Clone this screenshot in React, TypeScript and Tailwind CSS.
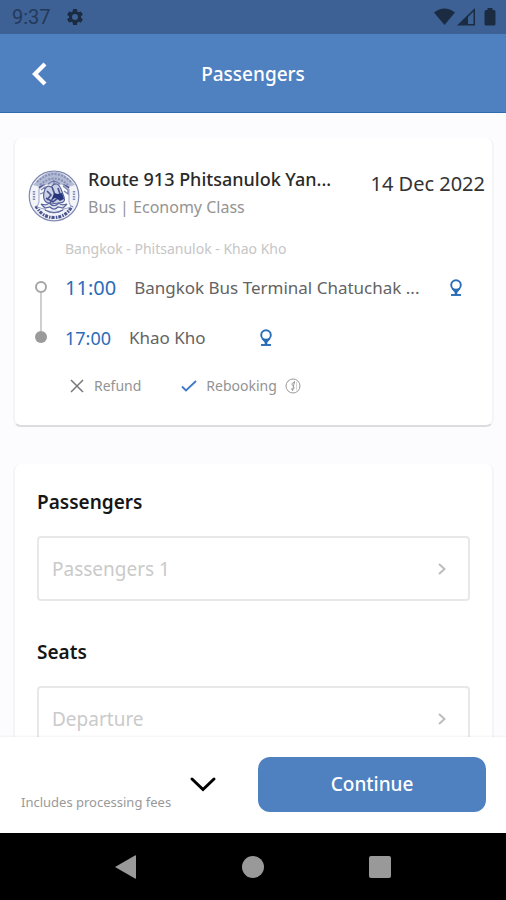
import type { ReactNode } from "react";

function StatusBar() {
  return (
    <div className="flex h-[34px] shrink-0 items-center justify-between bg-[#3d6194] pl-3 pr-[10px] text-[#1b2c42]">
      <div className="flex items-center gap-[14px]">
        <span className="font-['Roboto',sans-serif] text-[20px] leading-6 text-[#24395a]">9:37</span>
        <svg className="h-5 w-5" viewBox="0 0 24 24" fill="currentColor">
          <path d="M19.14 12.94c.04-.3.06-.61.06-.94 0-.32-.02-.64-.07-.94l2.03-1.58a.49.49 0 0 0 .12-.61l-1.92-3.32a.49.49 0 0 0-.59-.22l-2.39.96c-.5-.38-1.03-.7-1.62-.94l-.36-2.54a.48.48 0 0 0-.48-.41h-3.84a.47.47 0 0 0-.47.41l-.36 2.54c-.59.24-1.13.57-1.62.94l-2.39-.96a.48.48 0 0 0-.59.22L2.74 8.87c-.12.21-.08.47.12.61l2.03 1.58c-.05.3-.09.63-.09.94s.02.64.07.94l-2.03 1.58a.49.49 0 0 0-.12.61l1.92 3.32c.12.22.37.29.59.22l2.39-.96c.5.38 1.03.7 1.62.94l.36 2.54c.05.24.24.41.48.41h3.84c.24 0 .44-.17.47-.41l.36-2.54c.59-.24 1.13-.56 1.62-.94l2.39.96c.22.08.47 0 .59-.22l1.92-3.32a.47.47 0 0 0-.12-.61l-2.01-1.58zM12 15.6a3.6 3.6 0 1 1 0-7.2 3.6 3.6 0 0 1 0 7.2z" />
        </svg>
      </div>
      <svg className="h-[18px] w-[62px]" viewBox="0 0 62 18" fill="currentColor">
        <path d="M0 4.500Q10.500-3.500 21 4.500L10.500 17Z" />
        <path d="M23 17.500 34 6.800V17.500ZM34 6.800 41 0V17.500H34V16H39.500V3.600L34 9Z" />
        <path d="M53.500 0h5v2h1.500a1.500 1.500 0 0 1 1.500 1.500V16a1.500 1.500 0 0 1-1.500 1.500h-8a1.500 1.500 0 0 1-1.500-1.500V3.500a1.500 1.500 0 0 1 1.500-1.500h1.500Z" />
      </svg>
    </div>
  );
}

function Header() {
  return (
    <header className="grid h-[79px] shrink-0 grid-cols-[78px_1fr_78px] items-center border-b border-[#2f6bb0] bg-[#4f81c1] pt-[2px]">
      <button type="button" aria-label="Back" className="flex h-full items-center justify-center text-white">
        <svg className="h-6 w-4" viewBox="0 0 16 24" fill="none" stroke="currentColor" strokeWidth="4.200">
          <path d="M14 2 4 12 14 22" />
        </svg>
      </button>
      <h1 className="text-center text-[19px] font-medium leading-6 text-white">Passengers</h1>
    </header>
  );
}

function OperatorLogo() {
  return (
    <svg className="h-[52px] w-[52px] shrink-0" viewBox="0 0 52 52" fill="none" stroke="#59649b">
      <circle cx="26" cy="26" r="24.800" fill="#f3f4fa" stroke="#8089b0" strokeWidth="1.200" />
      <path d="M5 15Q26-12 47 15L40 17Q26 7 12 17Z" fill="#b3bbd4" stroke="none" />
      <path d="M9 12Q26-4 43 12M12 15Q26 2 40 15" strokeWidth="2" strokeDasharray="2 1.300" opacity="0.5" />
      <path d="M8 36Q14 47.500 26 47.500Q38 47.500 44 36" strokeWidth="3.200" strokeDasharray="3 1.200 1.500 1" stroke="#4b568f" />
      <path d="M6 21v10M46 21v10" strokeWidth="2.400" strokeDasharray="1.500 1" opacity="0.7" />
      <path d="M11 18 17 15M41 18 35 15" strokeWidth="2.400" stroke="#3f4a88" />
      <path d="M11 19v13l-2 5 7 2q10 8 20 0l7-2-2-5V19L34 14H18Z" fill="#fafbfe" stroke="#9aa3c6" />
      <path d="M13 20 17 17 17 22 12 24M35 16 40 20 40 24 36 21M26 10v7M20 14q6-5 12 0" strokeWidth="1.300" opacity="0.8" />
      <path d="M16 22q2-8 7-5 6-7 10 2l3 8q2 6-5 6l-8 1q-9-1-7-12z" fill="#cdd3e6" strokeWidth="1.200" />
      <path d="M19 21l4 4-4 5m5-13 3 8-5 8m8-15 2 6M18 28l7 4 6-5" strokeWidth="1.700" stroke="#4a5590" />
      <path d="m26 23 4 1 4-1 2 6-4 2-4-3-4 1z" fill="#27347e" stroke="none" />
      <path d="M13 34q6 2 8-1 5 5 10 0 2 3 8 1l-4 4-5-1q-4 4-8 0l-5 1zM17 40q9 5 18 0" strokeWidth="1.200" fill="#e4e8f3" />
    </svg>
  );
}

function PinButton({ place }: { place: string }) {
  return (
    <button type="button" aria-label={`Map of ${place}`} className="shrink-0 text-[#2b6cb8]">
      <svg className="h-[18px] w-[14px]" viewBox="0 0 14 18" fill="none" stroke="currentColor">
        <circle cx="7" cy="6" r="4.800" strokeWidth="1.900" />
        <path d="M3.200 9.500 7 13.500 10.800 9.500" strokeWidth="1.800" />
        <path d="M7 11v5" strokeWidth="2.600" />
        <path d="M2 16h10" strokeWidth="1.900" />
      </svg>
    </button>
  );
}

function TripCard() {
  return (
    <section className="rounded-lg border-x-2 border-b-2 border-x-[#f4f4f7] border-b-[#dcdcdf] bg-white pb-[27px] pl-[13px] pr-[7px] pt-[29px]">
      <div className="flex items-start">
        <div className="flex min-w-0 flex-1 items-end gap-2">
          <OperatorLogo />
          <div className="min-w-0 whitespace-nowrap pb-[3px]">
            <h2 className="text-[18px] font-medium leading-6 text-[#2a2a2a]">Route 913 Phitsanulok Yan...</h2>
            <p className="mt-1 text-[16px] leading-6 text-[#949494]">Bus | Economy Class</p>
          </div>
        </div>
        <time className="shrink-0 pt-[5px] text-[20px] leading-6 text-[#333]">14 Dec 2022</time>
      </div>

      <p className="ml-[37px] mt-[17px] text-[14px] leading-5 text-[#c6c6c6]">Bangkok - Phitsanulok - Khao Kho</p>

      <div className="mt-[17px] flex">
        <div className="flex w-[26px] flex-col items-center pb-[7px] pt-[5px]">
          <span className="h-3 w-3 rounded-full border-2 border-[#a5a5a5]" />
          <span className="w-[2px] flex-1 bg-[#cfcfcf]" />
          <span className="h-3 w-3 rounded-full bg-[#9a9a9a]" />
        </div>
        <ul className="ml-[11px] flex min-w-0 flex-1 flex-col gap-[26px] whitespace-nowrap">
          <li className="flex items-center pr-[22px]">
            <time className="text-[20px] leading-6 text-[#2b6cb8]">11:00</time>
            <span className="ml-[18px] flex-1 text-[17px] leading-6 text-[#636363]">Bangkok Bus Terminal Chatuchak ...</span>
            <PinButton place="Bangkok Bus Terminal Chatuchak" />
          </li>
          <li className="flex items-center">
            <time className="text-[18px] leading-6 text-[#2b6cb8]">17:00</time>
            <span className="ml-[18px] mr-[53px] text-[17px] leading-6 text-[#636363]">Khao Kho</span>
            <PinButton place="Khao Kho" />
          </li>
        </ul>
      </div>

      <div className="ml-[42px] mt-6 flex items-center text-[14px] leading-6 text-[#939393]">
        <svg className="mr-[10px] h-[14px] w-[14px]" viewBox="0 0 14 14" fill="none" stroke="#777" strokeWidth="1.500">
          <path d="m1 1 12 12M13 1 1 13" />
        </svg>
        <span>Refund</span>
        <svg className="ml-10 mr-[9px] h-3 w-4" viewBox="0 0 16 12" fill="none" stroke="#3f78c9" strokeWidth="1.800">
          <path d="m1 6.500 4 4L15 1" />
        </svg>
        <span>Rebooking</span>
        <svg className="ml-2 h-4 w-4" viewBox="0 0 16 16" fill="none" stroke="#999">
          <circle cx="8" cy="8" r="7" />
          <path d="M10 5C7.500 3.500 6 6.500 8 8s1 4-2 3M9.500 3 7.500 13" />
          <path d="M11.500 4v8" opacity="0.4" />
        </svg>
      </div>
    </section>
  );
}

function PickerField({ title, children }: { title: string; children: ReactNode }) {
  return (
    <div>
      <h3 className="text-[19px] font-semibold leading-6 text-[#161616]">{title}</h3>
      <button
        type="button"
        className="mt-[22px] flex h-[65px] w-full items-center justify-between rounded border-2 border-[#e8e8e8] pl-[13px] pr-[22px] text-left text-[19px] leading-6 text-[#cacaca]"
      >
        <span>{children}</span>
        <svg className="h-3 w-2" viewBox="0 0 8 12" fill="none" stroke="#bdbdbd" strokeWidth="2">
          <path d="m1 1 5.500 5L1 11" />
        </svg>
      </button>
    </div>
  );
}

function CheckoutBar() {
  return (
    <footer className="flex h-24 shrink-0 items-center bg-white pb-[2px] pl-[21px] pr-5 shadow-[0_-1px_2px_rgba(0,0,0,0.05)]">
      <p className="mt-[35px] whitespace-nowrap text-[13px] leading-5 text-[#999]">Includes processing fees</p>
      <button type="button" aria-label="Show price details" className="ml-auto mr-[41px]">
        <svg className="h-4 w-7" viewBox="0 0 28 16" fill="none" stroke="#000" strokeWidth="3" strokeLinecap="round">
          <path d="M3 3 14 13.500 25 3" />
        </svg>
      </button>
      <button type="button" className="h-[55px] w-[49%] rounded-xl bg-[#4f81c1] text-[19px] font-medium leading-6 text-white">
        Continue
      </button>
    </footer>
  );
}

function NavBar() {
  return (
    <nav className="grid h-[67px] shrink-0 grid-cols-[1fr_1fr_1fr] items-center justify-items-center bg-black px-[62px] text-[#999]">
      <button type="button" aria-label="Back">
        <svg className="h-6 w-[22px]" viewBox="0 0 22 24" fill="currentColor">
          <path d="M0 12 20 .5Q21 0 21 1V23Q21 24 20 23.500Z" />
        </svg>
      </button>
      <button type="button" aria-label="Home" className="h-[22px] w-[22px] rounded-full bg-[#999]" />
      <button type="button" aria-label="Recents" className="h-[22px] w-[22px] rounded-xs bg-[#999]" />
    </nav>
  );
}

export default function App() {
  return (
    <div className="flex h-screen flex-col bg-[#fcfcff] font-['Noto_Sans',sans-serif]">
      <StatusBar />
      <Header />
      <main className="min-h-0 flex-1 overflow-hidden pl-[13px] pr-3 pt-[25px]">
        <TripCard />
        <section className="mt-[37px] flex flex-col gap-[39px] rounded-lg border-x-2 border-[#f4f4f7] bg-white px-[22px] pb-10 pt-[26px]">
          <PickerField title="Passengers">Passengers 1</PickerField>
          <PickerField title="Seats">Departure</PickerField>
        </section>
      </main>
      <CheckoutBar />
      <NavBar />
    </div>
  );
}
